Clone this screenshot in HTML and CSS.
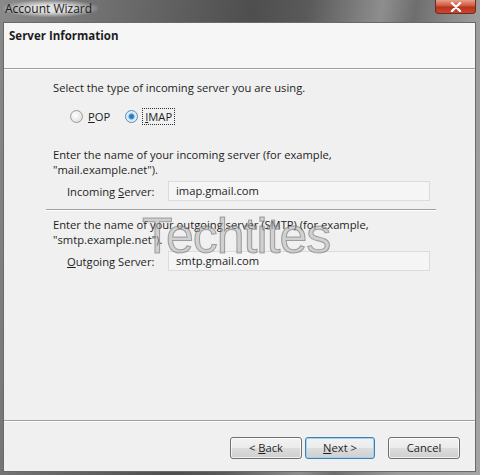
FILE: index.html
```html
<!DOCTYPE html>
<html lang="en">
<head>
<meta charset="utf-8">
<title>Account Wizard</title>
<link rel="stylesheet" href="styles.css">
</head>
<body>
<div class="window">
  <div class="titlebar">
    <span class="title">Account Wizard</span>
    <span class="close">
      <svg width="14" height="10" viewBox="0 0 14 10"><path d="M3 1 L11 9 M11 1 L3 9" stroke="#fff" stroke-width="2.4" stroke-linecap="round"/></svg>
    </span>
  </div>
  <div class="client">
    <div class="header">Server Information</div>
    <div class="content">
      <p class="line">Select the type of incoming server you are using.</p>
      <div class="radios">
        <label class="radio"><span class="dot"></span><span><u>P</u>OP</span></label>
        <label class="radio on"><span class="dot"></span><span class="focus"><u>I</u>MAP</span></label>
      </div>
      <p class="para">Enter the name of your incoming server (for example,<br>"mail.example.net").</p>
      <div class="field">
        <span class="lbl">Incoming <u>S</u>erver:</span>
        <span class="input">imap.gmail.com</span>
      </div>
      <hr class="sep">
      <p class="para second">Enter the name of your outgoing server (SMTP) (for example,<br>"smtp.example.net").</p>
      <div class="field">
        <span class="lbl"><u>O</u>utgoing Server:</span>
        <span class="input">smtp.gmail.com</span>
      </div>
      <div class="watermark">Techtites</div>
    </div>
    <div class="footer">
      <button class="btn">&lt; <u>B</u>ack</button>
      <button class="btn default"><u>N</u>ext &gt;</button>
      <button class="btn cancel">Cancel</button>
    </div>
  </div>
</div>
</body>
</html>
```

FILE: styles.css
```css
* { box-sizing: border-box; }

html, body {
  margin: 0;
  padding: 0;
}

body {
  width: 480px;
  height: 475px;
  overflow: hidden;
  font-family: "Open Sans", "Noto Sans", sans-serif;
  font-size: 11.2px;
  color: #1e1e1e;
}

.window {
  width: 480px;
  height: 475px;
  display: flex;
  flex-direction: column;
  background: linear-gradient(100deg, #8a8a8a 0%, #6e6e6e 20%, #4e4e4e 45%, #5a5a5a 55%, #8e8e8e 68%, #6e6e6e 74%, #9c9c9c 85%, #a4a4a4 100%);
}

.titlebar {
  height: 22px;
  flex: none;
  position: relative;
  display: flex;
  align-items: center;
}

.title {
  margin-left: 3px;
  margin-top: -5px;
  font-size: 12px;
  color: #1a1a1a;
  padding: 0 6px 0 2px;
  background: radial-gradient(ellipse at center, rgba(235,235,235,0.9) 30%, rgba(235,235,235,0) 75%);
}

.close {
  position: absolute;
  top: 0;
  right: 4px;
  width: 41px;
  height: 14px;
  border: 1px solid #6e2a20;
  border-top: none;
  border-radius: 0 0 4px 4px;
  background: linear-gradient(#e8a08c 0%, #d0553e 45%, #b8321c 55%, #c8492e 100%);
  display: flex;
  align-items: center;
  justify-content: center;
}

.client {
  flex: 1;
  display: flex;
  flex-direction: column;
  margin: 0 4px 3px 3px;
  border: 1px solid #6a6a6a;
  background: #f0f0f0;
}

.header {
  height: 46px;
  flex: none;
  background: #f6f6f6;
  border-bottom: 1px solid #a0a0a0;
  box-shadow: 0 1px 0 #ffffff;
  font-weight: bold;
  font-size: 11.5px;
  padding: 5px 0 0 5px;
}

.content {
  flex: 1;
  position: relative;
  padding: 11px 45px 0 49px;
}

.line, .para {
  margin: 0;
  line-height: 15px;
}

.radios {
  display: flex;
  gap: 15px;
  margin: 12px 0 0 17px;
  height: 18px;
  align-items: center;
}

.radio {
  display: flex;
  align-items: center;
  gap: 5px;
}

.dot {
  width: 13px;
  height: 13px;
  border-radius: 50%;
  border: 1px solid #9a9a9a;
  background: radial-gradient(circle at 40% 40%, #ffffff 0%, #e4e4e4 70%, #cfcfcf 100%);
  display: inline-block;
}

.radio.on .dot {
  border-color: #5a8cb8;
  background: radial-gradient(circle, #1f6aa8 0%, #3c8fcf 30%, #d8e8f4 45%, #eef4fa 100%);
}

.focus {
  outline: 1px dotted #333;
  padding: 0 2px;
  line-height: 15px;
}

.para {
  margin-top: 22px;
}

.para.second {
  margin-top: 6px;
}

.field {
  display: flex;
  align-items: center;
  margin: 4px 0 0 14px;
  height: 20px;
}

.lbl {
  width: 101px;
}

.input {
  flex: 1;
  height: 20px;
  border: 1px solid #dcdcdc;
  background: #f5f5f5;
  padding: 1px 0 0 7px;
  line-height: 16px;
}

.sep {
  border: none;
  border-top: 1px solid #a0a0a0;
  border-bottom: 1px solid #ffffff;
  margin: 8px -6px 0 -7px;
}

.watermark {
  position: absolute;
  left: 138px;
  top: 138px;
  font-family: "Liberation Sans", sans-serif;
  font-size: 50px;
  letter-spacing: -1px;
  color: rgba(175,175,175,0.5);
  -webkit-text-stroke: 1px rgba(90,90,90,0.5);
  pointer-events: none;
}

.footer {
  height: 51px;
  flex: none;
  border-top: 1px solid #a0a0a0;
  box-shadow: inset 0 1px 0 #ffffff;
  display: flex;
  justify-content: flex-end;
  align-items: center;
  padding: 3px 15px 0 0;
  gap: 3px;
}

.btn {
  width: 72px;
  height: 22px;
  font-family: inherit;
  font-size: 11.2px;
  color: #1e1e1e;
  border: 1px solid #707070;
  border-radius: 3px;
  background: linear-gradient(#f2f2f2 0%, #ebebeb 50%, #dddddd 51%, #cfcfcf 100%);
  box-shadow: inset 0 0 0 1px rgba(255,255,255,0.7);
  padding: 0;
}

.btn.default {
  border-color: #3c7fb1;
  box-shadow: inset 0 0 0 1px #9fd5f5;
  width: 70px;
}

.btn.cancel {
  margin-left: 10px;
}
```
